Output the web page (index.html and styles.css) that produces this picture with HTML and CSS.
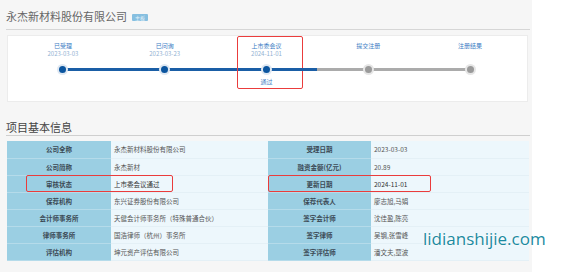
FILE: index.html
```html
<!DOCTYPE html>
<html lang="zh">
<head>
  <meta charset="UTF-8" />
  <title>永杰新材料股份有限公司</title>
  <link rel="stylesheet" href="styles.css">
</head>
<body>
  <div class="page">
    <div class="head">
      <h1>永杰新材料股份有限公司</h1>
      <span class="badge">主板</span>
    </div>

    <div class="progress">
      <div class="step done">
        <div class="name">已受理</div>
        <div class="date">2023-03-03</div>
        <div class="dot"></div>
      </div>
      <div class="step done">
        <div class="name">已问询</div>
        <div class="date">2023-03-23</div>
        <div class="dot"></div>
      </div>
      <div class="step done current">
        <div class="name">上市委会议</div>
        <div class="date">2024-11-01</div>
        <div class="dot"></div>
        <div class="result">通过</div>
        <div class="mark"></div>
      </div>
      <div class="step">
        <div class="name">提交注册</div>
        <div class="date"></div>
        <div class="dot"></div>
      </div>
      <div class="step last">
        <div class="name">注册结果</div>
        <div class="date"></div>
        <div class="dot"></div>
      </div>
    </div>

    <h2>项目基本信息</h2>

    <div class="info">
      <table class="grid">
        <tr><th>公司全称</th><td>永杰新材料股份有限公司</td><th>受理日期</th><td>2023-03-03</td></tr>
        <tr><th>公司简称</th><td>永杰新材</td><th>融资金额(亿元)</th><td>20.89</td></tr>
        <tr class="hl"><th>审核状态</th><td>上市委会议通过</td><th>更新日期</th><td>2024-11-01</td></tr>
        <tr><th>保荐机构</th><td>东兴证券股份有限公司</td><th>保荐代表人</th><td>廖志旭,马娟</td></tr>
        <tr><th>会计师事务所</th><td>天健会计师事务所（特殊普通合伙）</td><th>签字会计师</th><td>沈佳盈,陈亮</td></tr>
        <tr><th>律师事务所</th><td>国浩律师（杭州）事务所</td><th>签字律师</th><td>吴钢,张雪峰</td></tr>
        <tr><th>评估机构</th><td>坤元资产评估有限公司</td><th>签字评估师</th><td>潘文夫,覃波</td></tr>
      </table>
      <div class="mark row-left"></div>
      <div class="mark row-right"></div>
    </div>
  </div>

  <div class="watermark">lidianshijie.com</div>
</body>
</html>
```

FILE: styles.css
```css
body {
  margin: 0;
  background: #fff;
  font-family: "Noto Sans CJK SC", "Noto Sans", sans-serif;
  position: relative;
  height: 272px;
  overflow: hidden;
}

.page {
  width: 523px;
  height: 272px;
  padding: 0 2px 0 7px;
  background: #f6f6f6;
}

.head {
  display: flex;
  align-items: center;
  gap: 5px;
  height: 29px;
  margin-left: -1px;
  border-bottom: 1px solid #d6d6d6;
}
.head h1 {
  margin: 0;
  font-size: 11px;
  font-weight: normal;
  color: #666;
  line-height: 14px;
  padding-top: 3px;
}
.badge {
  margin-top: 6px;
  padding: 0 3px;
  height: 7px;
  line-height: 7px;
  font-size: 5px;
  color: #e8f4fb;
  background: #86bfe0;
  border-radius: 1px;
}

/* progress card */
.progress {
  display: flex;
  margin-top: 5px;
  height: 67px;
  padding: 0 6px 0 4px;
  background: #fff;
  border: 1px solid #ececec;
  box-sizing: border-box;
  width: 521px;
}
.step {
  flex: 1;
  position: relative;
  text-align: center;
}
.step .name {
  margin-top: 6px;
  font-size: 6px;
  line-height: 8px;
  color: #3b7cc4;
}
.step .date {
  height: 8px;
  font-size: 6px;
  line-height: 8px;
  color: #8fb0d2;
}
.step .dot {
  position: relative;
  margin: 8px auto 0;
  width: 7px;
  height: 7px;
  border-radius: 50%;
  background: #9a9a9a;
  box-shadow: 0 0 0 2px #e6e6e6;
  z-index: 1;
}
.step::after {
  content: "";
  position: absolute;
  top: 32px;
  left: 50%;
  width: 100%;
  height: 3px;
  background: #ababab;
}
.step.last::after {
  display: none;
}
.step.done .dot {
  background: #0b559f;
  box-shadow: 0 0 0 2px #dfe8f2;
}
.step.done::after {
  background: #1a5ea6;
}
.step.current::after {
  background: linear-gradient(to right, #1a5ea6 50%, #ababab 50%);
}
.step .result {
  margin-top: 5px;
  font-size: 6px;
  line-height: 8px;
  color: #3b7cc4;
}

.mark {
  position: absolute;
  border: 1.5px solid #ea3c3c;
  border-radius: 2px;
}
.step .mark {
  top: 0;
  left: 21px;
  width: 64px;
  height: 51px;
}

h2 {
  margin: 0 0 0 -1px;
  height: 34px;
  padding-top: 19px;
  box-sizing: border-box;
  font-size: 11px;
  line-height: 12px;
  font-weight: normal;
  color: #444;
  border-bottom: 1px solid #cfcfcf;
}

/* info table */
.info {
  position: relative;
  margin-top: 5px;
}
.grid {
  border-collapse: collapse;
  width: 522px;
  table-layout: fixed;
  background: #fff;
}
.grid th,
.grid td {
  height: 17px;
  padding: 0 3px;
  font-size: 6.5px;
  border-bottom: 1px solid #e4f0f6;
  box-sizing: border-box;
  white-space: nowrap;
}
.grid th {
  background: #9bcfe3;
  color: #3b4a55;
  font-weight: bold;
  text-align: center;
  border-bottom-color: #b5dbea;
}
.grid th:nth-child(1) { width: 104px; }
.grid td:nth-child(2) { width: 157px; }
.grid th:nth-child(3) { width: 103px; }
.grid td {
  background: #edf7fc;
  color: #555;
}
.grid .hl td {
  color: #333;
}
.row-left {
  top: 34px;
  left: 19px;
  width: 145px;
  height: 15px;
}
.row-right {
  top: 34px;
  left: 261px;
  width: 161px;
  height: 15px;
}

.watermark {
  position: absolute;
  left: 423px;
  top: 227px;
  font-family: "Open Sans", "DejaVu Sans", sans-serif;
  font-size: 17px;
  color: #1b8aa0;
  text-shadow: 0 0 2px #fff, 0 0 2px #fff;
}
```
